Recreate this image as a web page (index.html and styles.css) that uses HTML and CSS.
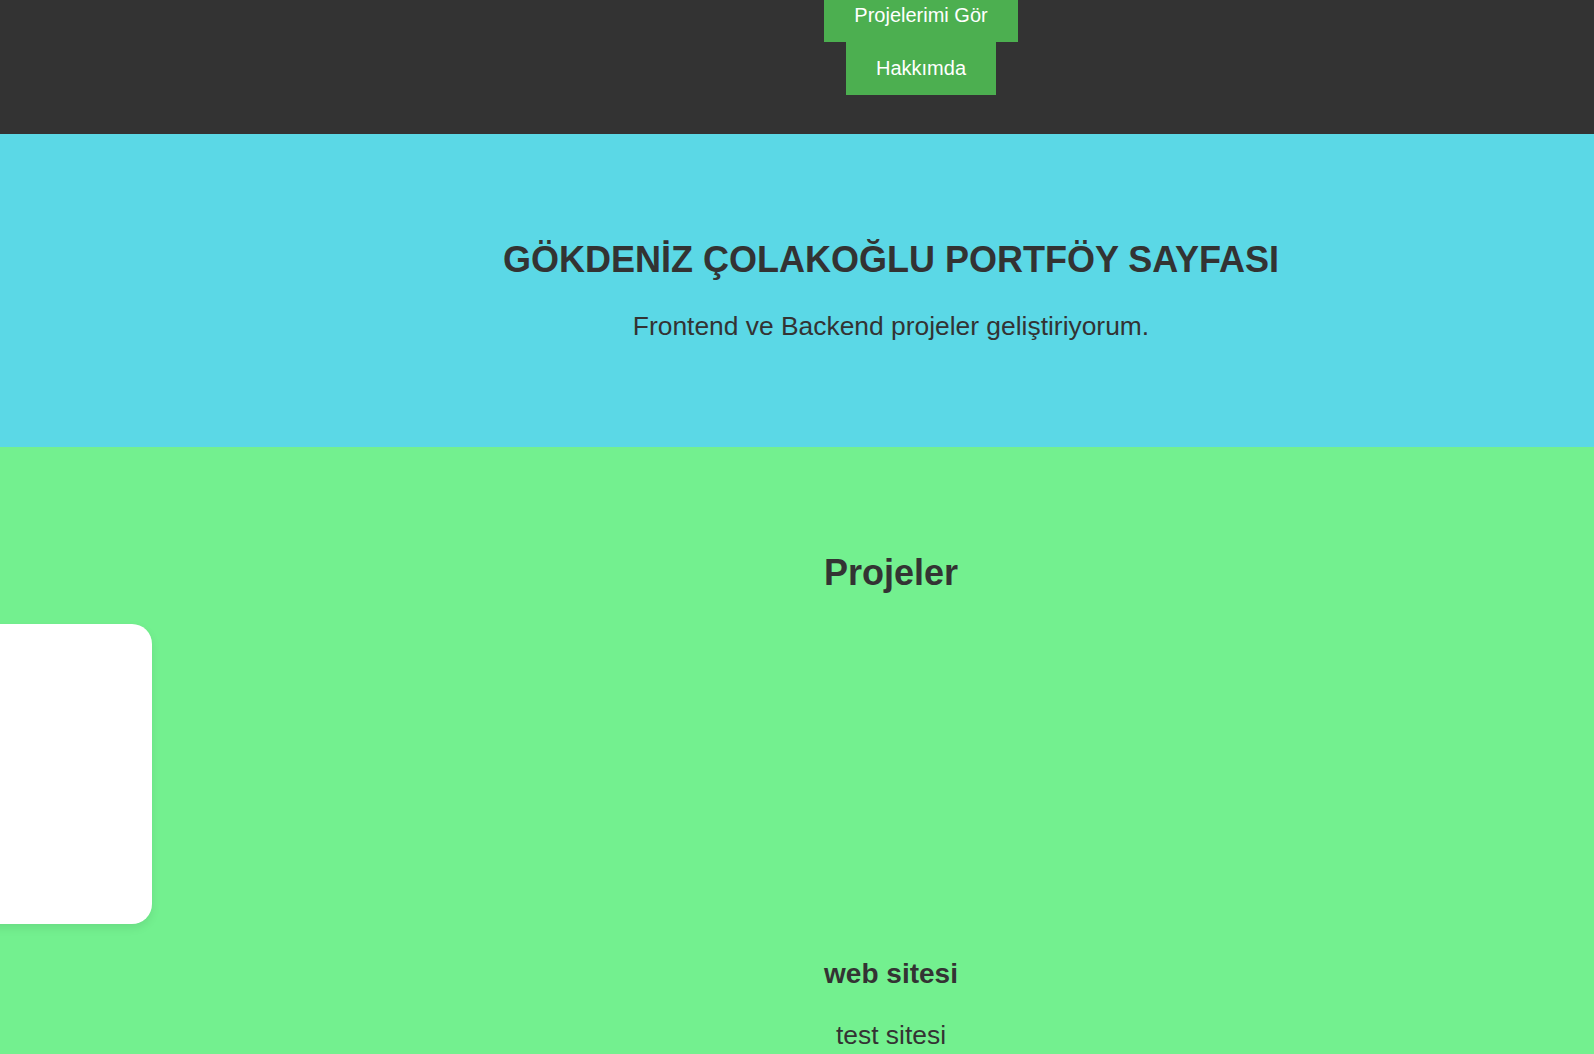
FILE: index.html
```html
<!DOCTYPE html>
<html lang="tr">
<head>
<meta charset="utf-8">
<title>Gökdeniz Çolakoğlu Portföy</title>
<link rel="stylesheet" href="styles.css">
</head>
<body>
<header class="topbar">
  <nav class="nav">
    <a class="btn btn-first" href="#projeler">Projelerimi Gör</a>
    <a class="btn" href="#hakkimda">Hakkımda</a>
  </nav>
</header>
<section class="hero">
  <h1 class="hero-title">GÖKDENİZ ÇOLAKOĞLU PORTFÖY SAYFASI</h1>
  <p class="hero-sub">Frontend ve Backend projeler geliştiriyorum.</p>
</section>
<section class="projects" id="projeler">
  <h2 class="projects-title">Projeler</h2>
  <div class="card-row">
    <div class="card"></div>
  </div>
  <div class="project">
    <h3 class="project-name">web sitesi</h3>
    <p class="project-desc">test sitesi</p>
  </div>
</section>
</body>
</html>
```
FILE: styles.css
```css
* { box-sizing: border-box; }
html, body { margin: 0; padding: 0; }
body {
  font-family: "Liberation Sans", Arial, sans-serif;
  color: #333;
  background: #73f08f;
  overflow: hidden;
}
.topbar {
  display: flow-root;
  background: #333;
  height: 134px;
  padding-left: 248px;
}
.nav {
  display: flex;
  flex-direction: column;
  align-items: center;
  margin-top: -11px;
}
.btn {
  display: block;
  background: #4caf50;
  color: #fff;
  text-decoration: none;
  font-size: 20px;
  line-height: 23px;
  padding: 15px 30px;
}
.hero {
  background: #5bd8e6;
  height: 313px;
  padding-left: 188px;
  padding-top: 101px;
  text-align: center;
}
.hero-title {
  margin: 0;
  font-size: 36px;
  line-height: 50px;
  font-weight: bold;
}
.hero-sub {
  margin: 26px 0 0;
  font-size: 26.4px;
  line-height: 30px;
}
.projects {
  padding-left: 188px;
  text-align: center;
  padding-top: 101px;
}
.projects-title {
  margin: 0;
  font-size: 36px;
  line-height: 50px;
}
.card-row {
  display: flex;
  margin-left: -188px;
  margin-top: 26px;
}
.card {
  width: 300px;
  height: 300px;
  margin-left: -148px;
  background: #fff;
  border-radius: 20px;
  box-shadow: 0 4px 10px rgba(0,0,0,0.08);
}
.project-name {
  margin: 34px 0 0;
  font-size: 28px;
  line-height: 32px;
}
.project-desc {
  margin: 30px 0 0;
  font-size: 26.4px;
  line-height: 30px;
}
```
